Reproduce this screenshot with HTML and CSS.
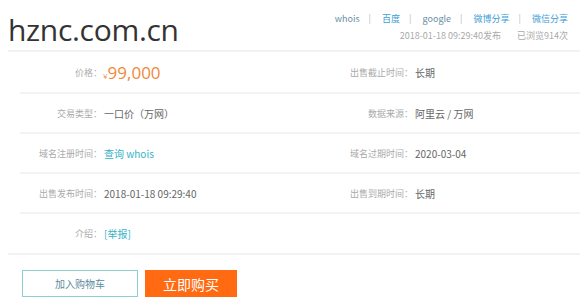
FILE: index.html
```html
<!DOCTYPE html>
<html lang="zh-CN">
<head>
<meta charset="UTF-8">
<title>hznc.com.cn</title>
<link rel="stylesheet" href="styles.css">
</head>
<body>
<div class="page">
  <div class="header">
    <h1 class="domain">hznc.com.cn</h1>
    <div class="meta">
      <div class="links">
        <a class="plain">whois</a><span class="sep">|</span>
        <a>百度</a><span class="sep">|</span>
        <a class="plain">google</a><span class="sep">|</span>
        <a>微博分享</a><span class="sep">|</span>
        <a>微信分享</a>
      </div>
      <div class="stats">
        <span>2018-01-18 09:29:40发布</span>
        <span>已浏览914次</span>
      </div>
    </div>
  </div>

  <div class="info">
    <div class="row">
      <div class="cell"><span class="label">价格：</span><span class="price"><small>¥</small>99,000</span></div>
      <div class="cell right"><span class="label">出售截止时间：</span><span class="value">长期</span></div>
    </div>
    <div class="row">
      <div class="cell"><span class="label">交易类型：</span><span class="value">一口价（万网）</span></div>
      <div class="cell right"><span class="label">数据来源：</span><span class="value">阿里云 / 万网</span></div>
    </div>
    <div class="row">
      <div class="cell"><span class="label">域名注册时间：</span><span class="value link">查询 whois</span></div>
      <div class="cell right"><span class="label">域名过期时间：</span><span class="value">2020-03-04</span></div>
    </div>
    <div class="row">
      <div class="cell"><span class="label">出售发布时间：</span><span class="value">2018-01-18 09:29:40</span></div>
      <div class="cell right"><span class="label">出售到期时间：</span><span class="value">长期</span></div>
    </div>
    <div class="row last">
      <div class="cell"><span class="label">介绍：</span><span class="value link">[举报]</span></div>
    </div>
  </div>

  <div class="actions">
    <button class="btn cart">加入购物车</button>
    <button class="btn buy">立即购买</button>
  </div>
</div>
</body>
</html>
```

FILE: styles.css
```css
body {
  margin: 0;
  background: #fff;
  font-family: "Noto Sans CJK SC", "Noto Sans", sans-serif;
  color: #555;
}
.page {
  width: 572px;
  padding: 0 8px;
}
.header {
  display: flex;
  justify-content: space-between;
  align-items: flex-start;
  border-bottom: 2px solid #f2f2f2;
  height: 50px;
}
.domain {
  margin: 12px 0 0;
  font-family: "Open Sans", "Noto Sans", sans-serif;
  font-weight: 400;
  font-size: 30px;
  line-height: 36px;
  color: #333;
  letter-spacing: -0.3px;
}
.meta {
  padding-top: 11px;
  padding-right: 12px;
  text-align: right;
  font-size: 9px;
  line-height: 16px;
}
.links a {
  color: #3d9ed6;
}
.links a.plain {
  color: #6a8ea6;
}
.sep {
  color: #bbb;
  margin: 0 9px;
}
.stats {
  color: #aaa;
  margin-top: 1px;
}
.stats span + span {
  margin-left: 14px;
}
.info {
  margin-left: 12px;
}
.row {
  display: flex;
  height: 38px;
  align-items: center;
  border-bottom: 2px solid #f3f3f3;
}
.row:first-child {
  height: 40px;
}
.row.last {
  border-bottom: none;
  height: 39px;
}
.cell {
  display: flex;
  align-items: center;
  width: 295px;
}
.label {
  width: 82px;
  text-align: right;
  font-size: 9px;
  color: #aaa;
}
.cell.right .label {
  width: 113px;
}
.value {
  margin-left: 2px;
  font-size: 10px;
  color: #666;
}
.value.link {
  color: #36b3c6;
}
.price {
  margin-left: 1px;
  font-family: "Open Sans", "Noto Sans", sans-serif;
  font-size: 17px;
  color: #f2883a;
}
.price small {
  font-size: 8px;
}
.actions {
  border-top: 2px solid #f2f2f2;
  padding: 15px 0 0 14px;
  display: flex;
  gap: 7px;
}
.btn {
  height: 27px;
  font-family: "Noto Sans CJK SC", sans-serif;
  cursor: pointer;
}
.cart {
  width: 116px;
  background: #fff;
  border: 1px solid #8ccfcf;
  color: #5a8aa0;
  font-size: 10px;
}
.buy {
  width: 92px;
  background: #ff6a12;
  border: none;
  color: #fff;
  font-size: 14px;
}
```
